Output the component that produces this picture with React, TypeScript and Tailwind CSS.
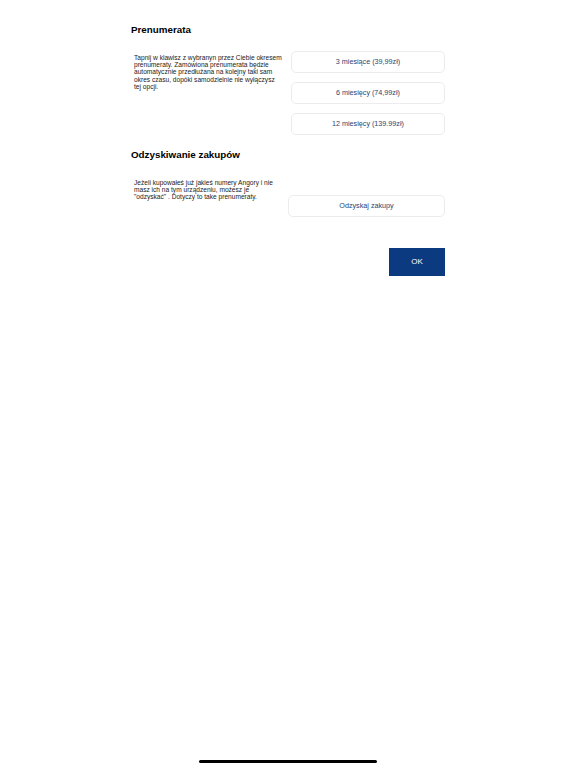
const plans = ["3 miesiące (39,99zł)", "6 miesięcy (74,99zł)", "12 miesięcy (139.99zł)"];

const font = { fontFamily: '"Liberation Sans", Arial, sans-serif' };

const OptionButton: React.FC<{ label: string; className?: string }> = ({ label, className }) => (
  <button
    className={
      "flex h-[22px] items-center justify-center rounded-[5px] border border-[#ececec] bg-white text-[7.2px] text-[#2b4473] " +
      (className ?? "")
    }
  >
    {label}
  </button>
);

export default function App() {
  return (
    <div className="flex h-[768px] flex-col bg-white text-black" style={font}>
      <div className="mx-auto flex w-[314px] flex-col pt-[23px]">
        <h2 className="text-[9.8px] font-bold leading-[14px]">Prenumerata</h2>

        <div className="mt-[14px] flex justify-between">
          <p className="mt-[3px] w-[152px] pl-[3px] text-[6.6px] leading-[7.2px] text-[#222]">
            Tapnij w klawisz z wybranyn przez Ciebie okresem prenumeraty. Zamówiona prenumerata będzie
            automatycznie przedłużana na kolejny taki sam okres czasu, dopóki samodzielnie nie wyłączysz
            tej opcji.
          </p>
          <div className="flex w-[154px] flex-col gap-[9px]">
            {plans.map((p) => (
              <OptionButton key={p} label={p} />
            ))}
          </div>
        </div>

        <h2 className="mt-[13px] text-[9.8px] font-bold leading-[14px]">Odzyskiwanie zakupów</h2>

        <div className="mt-[16px] flex justify-between">
          <p className="mt-[1px] w-[150px] pl-[3px] text-[6.6px] leading-[7.2px] text-[#222]">
            Jeżeli kupowałeś już jakieś numery Angory i nie masz ich na tym urządzeniu, możesz je
            "odzyskać" . Dotyczy to take prenumeraty.
          </p>
          <OptionButton label="Odzyskaj zakupy" className="mt-[17px] w-[157px]" />
        </div>

        <button className="mt-[31px] flex h-[28px] w-[56px] items-center justify-center self-end bg-[#0b3a80] text-[8px] text-white">
          OK
        </button>
      </div>

      <div className="mt-auto mb-[5px] flex justify-center">
        <div className="h-[3px] w-[178px] rounded-full bg-black" />
      </div>
    </div>
  );
}
